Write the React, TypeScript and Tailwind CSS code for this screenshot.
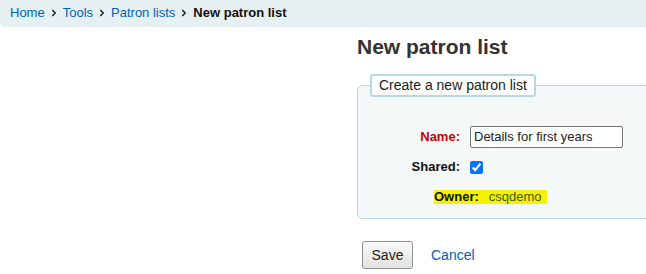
import { ChevronRight } from 'lucide-react';

const crumbs = ['Home', 'Tools', 'Patron lists'];

export default function App() {
  return (
    <div className="w-[646px] h-[274px] bg-white overflow-hidden text-[13px] text-[#333]" style={{ fontFamily: '"Liberation Sans", Arial, sans-serif' }}>
      <nav className="h-[27px] bg-[#e6f0f2] rounded-bl-[6px] flex items-center pl-[10px] gap-[4px] pb-[2px]">
        {crumbs.map((c) => (
          <span key={c} className="flex items-center gap-[4px]">
            <a className="text-[#0061b5] text-[13px]">{c}</a>
            <ChevronRight className="w-[10px] h-[10px] text-[#222]" strokeWidth={4} />
          </span>
        ))}
        <span className="font-bold text-[#111]">New patron list</span>
      </nav>

      <div className="flex">
        <aside className="w-[357px] shrink-0" />
        <main className="flex-1 min-w-0">
          <h1 className="text-[21px] font-bold text-[#333] mt-[7px] leading-[26px]">New patron list</h1>

          <fieldset className="mt-[14px] -mr-[20px] border border-[#b9d9dc] rounded-[6px] bg-[#f4f8f9] pl-0 pt-[23px] pb-[14px]">
            <legend className="ml-[12px] px-[7px] border-2 border-[#b9d9dc] rounded-[3px] bg-white text-[14px] text-[#222] leading-[18px] h-[23px]">
              Create a new patron list
            </legend>

            <div className="flex items-center h-[23px] mt-[5px]">
              <label className="w-[102px] text-right font-bold text-[#cc0000]">Name:</label>
              <input
                className="ml-[10px] w-[153px] h-[22px] border border-[#767676] rounded-[2px] bg-white px-[3px] text-[13px] text-[#222] outline-none"
                defaultValue="Details for first years"
              />
            </div>

            <div className="flex items-center h-[20px] mt-[9px]">
              <label className="w-[102px] text-right font-bold text-[#111]">Shared:</label>
              <input type="checkbox" defaultChecked className="ml-[10px] w-[13px] h-[13px] accent-[#0075ff]" />
            </div>

            <div className="flex items-center mt-[13px] ml-[76px]">
              <span className="bg-[#f5f200] flex items-center gap-[10px] pr-[5px] h-[14px]">
                <span className="font-bold text-[#111]">Owner:</span>
                <span className="text-[#3a5a1a]">csqdemo</span>
              </span>
            </div>
          </fieldset>

          <div className="flex items-center mt-[22px] ml-[5px] gap-[18px]">
            <button className="w-[51px] h-[28px] border border-[#8f8f8f] rounded-[3px] bg-gradient-to-b from-[#fafafa] to-[#e2e2e2] text-[14px] text-[#222]">
              Save
            </button>
            <a className="text-[#0061b5] text-[14px]">Cancel</a>
          </div>
        </main>
      </div>
    </div>
  );
}
